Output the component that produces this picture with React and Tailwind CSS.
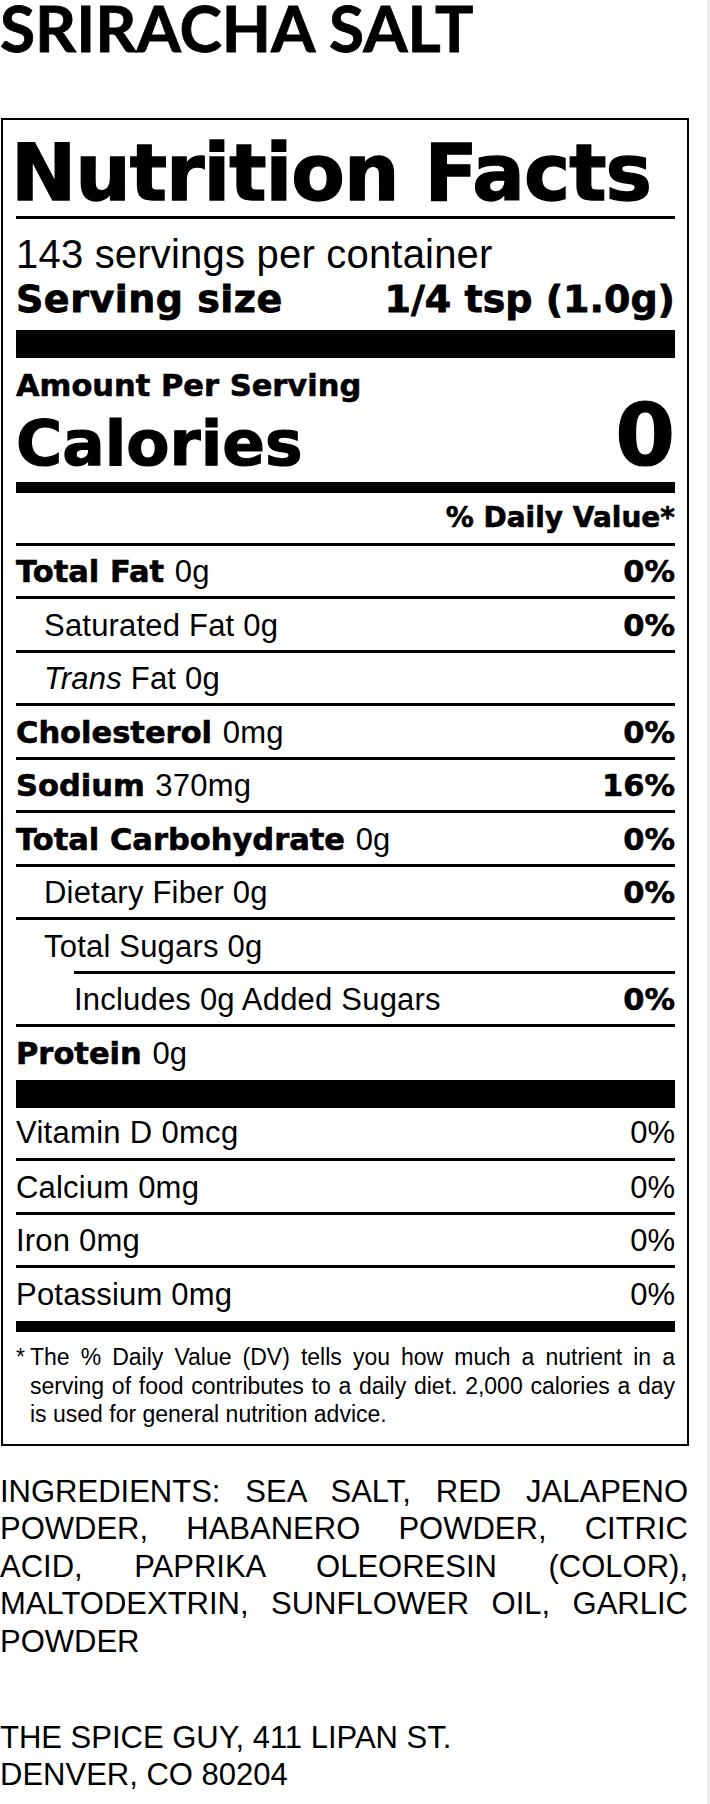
import React from "react";

const BOLD = "font-['DejaVu_Sans',sans-serif] font-bold [-webkit-text-stroke:0.6px_#000]";
const REG = "font-['Liberation_Sans',Arial,sans-serif] font-normal";

function Row({ children, right, rightBold = true, className = "" }) {
  return (
    <div className={`flex justify-between border-t-[3px] border-black pt-[6.5px] leading-[40px] ${className}`}>
      <div className={`${REG} text-[31px] tracking-[0.2px] whitespace-nowrap`}>{children}</div>
      {right ? (
        rightBold ? (
          <div className={`${BOLD} text-[30.5px]`}>{right}</div>
        ) : (
          <div className={`${REG} text-[31px]`}>{right}</div>
        )
      ) : null}
    </div>
  );
}

export default function App() {
  return (
    <div className="flex min-h-[1804px] w-[710px] bg-white text-black">
      <div className="w-[707px]">
        <h1 className="h-[56px] font-['Lato',sans-serif] text-[64px] font-bold leading-[56px] text-black [-webkit-text-stroke:0.8px_#000]">
          SRIRACHA SALT
        </h1>

        <div className="ml-[1px] mt-[62px] w-[688px] border-2 border-black pb-[15px] pl-[13px] pr-[12px] pt-[14px]">
          <div className={`${BOLD} -ml-[5px] text-[78px] leading-[78px] tracking-[-1px] whitespace-nowrap [-webkit-text-stroke:1.4px_#000]`}>
            Nutrition Facts
          </div>
          <div className="mt-[4px] h-[3px] bg-black" />

          <div className={`${REG} mt-[15px] text-[40px] leading-[40px] tracking-[0.2px]`}>
            143 servings per container
          </div>
          <div className={`${BOLD} mt-[5px] flex justify-between text-[38px] leading-[40px] [-webkit-text-stroke:0.8px_#000]`}>
            <span className="tracking-[0.5px]">Serving size</span>
            <span>1/4 tsp (1.0g)</span>
          </div>

          <div className="mt-[11px] h-[28px] bg-black" />

          <div className={`${BOLD} mt-[14px] text-[30.5px] leading-[28px]`}>Amount Per Serving</div>
          <div className={`${BOLD} flex h-[70px] items-baseline justify-between [-webkit-text-stroke:1.2px_#000]`}>
            <span className="text-[63px] leading-[70px]">Calories</span>
            <span className="text-[86px] leading-[70px]">0</span>
          </div>

          <div className="mt-[12px] h-[11px] bg-black" />

          <div className={`${BOLD} mt-[10px] text-right text-[28px] leading-[30px]`}>% Daily Value*</div>

          <div className="mt-[9.5px]">
            <Row right="0%" className="h-[53.5px]">
              <span className={`${BOLD} text-[30.5px] tracking-normal`}>Total Fat </span>0g
            </Row>
            <Row right="0%" className="h-[53.5px]">
              <span className="pl-[28px]">Saturated Fat 0g</span>
            </Row>
            <Row className="h-[53.5px]">
              <span className="pl-[28px]">
                <span className="italic">Trans</span> Fat 0g
              </span>
            </Row>
            <Row right="0%" className="h-[53.5px]">
              <span className={`${BOLD} text-[30.5px] tracking-normal`}>Cholesterol </span>0mg
            </Row>
            <Row right="16%" className="h-[53.5px]">
              <span className={`${BOLD} text-[30.5px] tracking-normal`}>Sodium </span>370mg
            </Row>
            <Row right="0%" className="h-[53.5px]">
              <span className={`${BOLD} text-[30.5px] tracking-normal`}>Total Carbohydrate </span>0g
            </Row>
            <Row right="0%" className="h-[53.5px]">
              <span className="pl-[28px]">Dietary Fiber 0g</span>
            </Row>
            <Row className="h-[53.5px]">
              <span className="pl-[28px]">Total Sugars 0g</span>
            </Row>
            <Row right="0%" className="ml-[58px] h-[53.5px]">
              Includes 0g Added Sugars
            </Row>
            <Row className="h-[56px]">
              <span className={`${BOLD} text-[30.5px] tracking-normal`}>Protein </span>0g
            </Row>
          </div>

          <div className="h-[28px] bg-black" />

          <div className="flex h-[50px] justify-between pt-[4.5px] leading-[40px]">
            <div className={`${REG} text-[31px] tracking-[0.3px]`}>Vitamin D 0mcg</div>
            <div className={`${REG} text-[31px]`}>0%</div>
          </div>
          <Row right="0%" rightBold={false} className="h-[53.5px]">
            Calcium 0mg
          </Row>
          <Row right="0%" rightBold={false} className="h-[53.5px]">
            Iron 0mg
          </Row>
          <Row right="0%" rightBold={false} className="h-[56px]">
            Potassium 0mg
          </Row>

          <div className="h-[11px] bg-black" />

          <div className={`${REG} mt-[11px] flex text-[23px] leading-[28.5px]`}>
            <span className="w-[14px] shrink-0">*</span>
            <p className="text-justify">
              The % Daily Value (DV) tells you how much a nutrient in a serving of food contributes to a
              daily diet. 2,000 calories a day is used for general nutrition advice.
            </p>
          </div>
        </div>

        <p className={`${REG} mt-[27px] w-[688px] text-justify text-[31px] leading-[37.6px]`}>
          INGREDIENTS: SEA SALT, RED JALAPENO POWDER, HABANERO POWDER, CITRIC ACID, PAPRIKA OLEORESIN
          (COLOR), MALTODEXTRIN, SUNFLOWER OIL, GARLIC POWDER
        </p>

        <div className={`${REG} mt-[58.5px] text-[31px] leading-[37.5px]`}>
          <p>THE SPICE GUY, 411 LIPAN ST.</p>
          <p>DENVER, CO 80204</p>
        </div>
      </div>
      <div className="w-[3px] bg-[#ececec]" />
    </div>
  );
}
